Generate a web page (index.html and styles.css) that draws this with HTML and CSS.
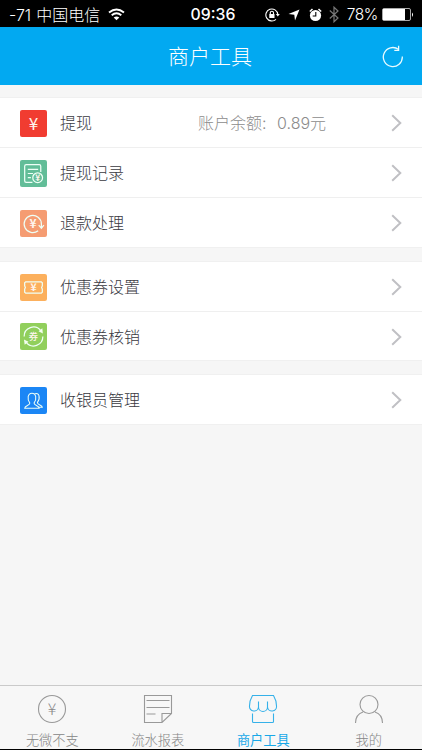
FILE: index.html
```html
<!DOCTYPE html>
<html lang="zh-CN">
<head>
<meta charset="utf-8">
<title>商户工具</title>
<link rel="stylesheet" href="styles.css">
</head>
<body>
<div class="app">
  <div class="status">
    <div class="carrier"><span class="signal">-71</span><span class="operator">中国电信</span>
      <svg width="17" height="13" viewBox="0 0 17 13" fill="none" stroke="#fff" stroke-width="1.9"><path d="M1 4.500Q8.500-1.700 16 4.500M3.700 7.300Q8.500 3.300 13.300 7.300"/><path d="M8.500 12.300L5.700 9.400Q8.500 7.400 11.300 9.400Z" fill="#fff" stroke="none"/></svg>
    </div>
    <time class="clock">09:36</time>
    <div class="indicators">
      <svg width="15" height="14" viewBox="0 0 15 14" fill="none" stroke="#fff" stroke-width="1.1"><path d="M11 11.300A6 6 0 1 1 12.800 6.200"/><path d="M10.800 6h4L12.800 8.600Z" fill="#fff" stroke="none"/><rect x="4.300" y="6" width="5.200" height="4" fill="#fff" stroke="none"/><path d="M5.300 6V4.800a1.600 1.600 0 0 1 3.200 0V6"/></svg>
      <svg class="locate" width="12" height="12" viewBox="0 0 12 12"><path d="M11.500.5L7 11.500 6.300 5.800.5 5Z" fill="#fff"/></svg>
      <svg class="alarm" width="13" height="14" viewBox="0 0 13 14"><circle cx="6.500" cy="7.500" r="5.600" fill="#fff"/><path d="M.8 3.500L3.500 1M12.200 3.500L9.500 1" stroke="#fff" stroke-width="1.500"/><path d="M6.800 4v4H3.700" fill="none" stroke="#000" stroke-width="1.100"/></svg>
      <svg class="bluetooth" width="10" height="17" viewBox="0 0 10 17" fill="none" stroke="#777" stroke-width="1.200"><path d="M.8 4.500L9 12 5 15.800V1.200L9 5 .8 12.500"/></svg>
      <span class="percent">78%</span>
      <svg width="32" height="14" viewBox="0 0 32 14"><rect x=".5" y=".5" width="28" height="12" rx="1.500" fill="none" stroke="#aaa"/><rect x="1" y="1" width="22" height="11" fill="#fff"/><path d="M30 4.500q2 2 0 4.500Z" fill="#fff"/></svg>
    </div>
  </div>

  <header class="header">
    <h1>商户工具</h1>
    <svg class="refresh" width="22" height="23" viewBox="0 0 22 23" fill="none" stroke="#e8fbff" stroke-width="1.300"><path d="M20.300 11.500A9.500 9.500 0 1 1 16.600 4.500"/><path d="M16.600.8V5.300H12.300"/></svg>
  </header>

  <main class="content">
    <section class="group">
      <a class="row">
        <svg class="icon" viewBox="0 0 26 26"><rect width="26" height="26" rx="2" fill="#f13c31"/><text class="yen" x="13" y="19" font-size="16.500">¥</text></svg>
        <span class="label">提现</span><span class="balance">账户余额: <span class="amount">0.89元</span></span>
        <svg class="chevron" viewBox="0 0 11 18"><path d="M1.200 1.200L9.300 9 1.200 16.800"/></svg>
      </a>
      <a class="row">
        <svg class="icon" viewBox="0 0 26 26"><rect width="26" height="26" rx="2" fill="#62bd98"/><g class="line"><path d="M12 21.500H6A1.500 1.500 0 0 1 4.500 20V6A1.500 1.500 0 0 1 6 4.500H18.500A1.500 1.500 0 0 1 20 6V11.500M7.500 9H17.500M7.500 13H12.500M7.500 17H10.500"/><circle cx="17" cy="17" r="4.700"/></g><text class="yen" x="17" y="20" font-size="8" font-weight="700">¥</text></svg>
        <span class="label">提现记录</span>
        <svg class="chevron" viewBox="0 0 11 18"><path d="M1.200 1.200L9.300 9 1.200 16.800"/></svg>
      </a>
      <a class="row">
        <svg class="icon" viewBox="0 0 26 26"><rect width="26" height="26" rx="2" fill="#f59c72"/><g class="line"><path d="M17.500 20A8.300 8.300 0 1 1 20.600 13.500V17M18 14.500L20.600 17.500 23 14.500"/></g><text class="yen" x="12.500" y="17.300" font-size="11.500" font-weight="700">¥</text></svg>
        <span class="label">退款处理</span>
        <svg class="chevron" viewBox="0 0 11 18"><path d="M1.200 1.200L9.300 9 1.200 16.800"/></svg>
      </a>
    </section>

    <section class="group">
      <a class="row">
        <svg class="icon" viewBox="0 0 26 26"><rect width="26" height="26" rx="2" fill="#fcb05d"/><path class="line" d="M5.500 7.500H20.500L21.500 8.500V11.500L20.800 13 21.500 14.500V17.500L20.500 18.500H5.500L4.500 17.500V14.500L5.200 13 4.500 11.500V8.500Z"/><text class="yen" x="13" y="16.700" font-size="10" font-weight="700">¥</text></svg>
        <span class="label">优惠券设置</span>
        <svg class="chevron" viewBox="0 0 11 18"><path d="M1.200 1.200L9.300 9 1.200 16.800"/></svg>
      </a>
      <a class="row">
        <svg class="icon" viewBox="0 0 26 26"><rect width="26" height="26" rx="2" fill="#91cf5c"/><path class="line" d="M4 13A9 9 0 0 1 20 7.300M22 13A9 9 0 0 1 6 18.700"/><path d="M21.500 5L22 10 17.800 8ZM4.500 21L3.800 16 8.200 18Z" fill="#f4fff0"/><text class="yen" x="13" y="16.400" font-size="9" font-weight="500">券</text></svg>
        <span class="label">优惠券核销</span>
        <svg class="chevron" viewBox="0 0 11 18"><path d="M1.200 1.200L9.300 9 1.200 16.800"/></svg>
      </a>
    </section>

    <section class="group">
      <a class="row">
        <svg class="icon" viewBox="0 0 26 26"><rect width="26" height="26" rx="2" fill="#1b86f5"/><path class="line people" d="M4.500 20.500C4.500 17.500 9.500 18 9.500 15.500C6.500 11.500 7.500 6 11.500 6S16.500 11.500 13.500 15.500C13.500 18 18.500 17.500 18.500 20.500ZM13.800 6.700C18.500 4.500 20 10.500 16.700 15C16.700 17.500 21.500 17 21.500 19.500H18.500"/></svg>
        <span class="label">收银员管理</span>
        <svg class="chevron" viewBox="0 0 11 18"><path d="M1.200 1.200L9.300 9 1.200 16.800"/></svg>
      </a>
    </section>
  </main>

  <nav class="tabs">
    <a class="tab">
      <svg viewBox="0 0 30 30"><circle cx="15" cy="15" r="13.500"/><text class="tab-yen" x="15" y="21">¥</text></svg>
      <span>无微不支</span>
    </a>
    <a class="tab">
      <svg viewBox="0 0 30 30"><path d="M1.500 1.500H28.500V19.500L19 28.500H1.500ZM28.500 19.500H19V28.500M3.500 6.500H26.500M3.500 13.500H26.500M3.500 20H12.500"/></svg>
      <span>流水报表</span>
    </a>
    <a class="tab active">
      <svg viewBox="0 0 30 30"><path d="M4.500 1.500H25.500C27 4 28.500 8 28.500 12A4.500 4.500 0 0 1 19.500 13A4.500 4.500 0 0 1 10.500 13A4.500 4.500 0 0 1 1.500 12C1.500 8 3 4 4.500 1.500ZM10.500 7.500V13M19.500 7.500V13M4.500 19.500V27.500Q4.500 28.500 5.500 28.500H24.500Q25.500 28.500 25.500 27.500V19.500"/></svg>
      <span>商户工具</span>
    </a>
    <a class="tab">
      <svg viewBox="0 0 30 30"><circle cx="15" cy="10.500" r="9"/><path d="M1.500 29C1.500 23.500 4.500 19.500 9 18M21 18C25.500 19.500 28.500 23.500 28.500 29"/></svg>
      <span>我的</span>
    </a>
  </nav>
</div>
</body>
</html>
```
FILE: styles.css
```css
* { box-sizing: border-box; }

body {
  margin: 0;
  background: #f6f6f6;
  font-family: Inter, "Noto Sans CJK SC", sans-serif;
}

.app {
  display: flex;
  flex-direction: column;
  height: 750px;
  border-bottom: 1px solid #000;
}

.status {
  display: grid;
  grid-template-columns: 1fr auto 1fr;
  align-items: center;
  flex: none;
  height: 27px;
  padding: 2px 8px 0 9px;
  background: #000;
  color: #fff;
  font-size: 15px;
  line-height: 24px;
  white-space: nowrap;
}

.carrier, .indicators { display: flex; align-items: center; }
.signal { font-size: 16px; font-weight: 300; }
.operator { margin: 0 8px 0 5px; font-size: 16px; font-weight: 300; }
.clock { margin-left: 3px; font-size: 15.8px; font-weight: 500; }
.indicators { justify-content: flex-end; }
.locate { margin-left: 8px; }
.alarm { margin-left: 9px; }
.bluetooth { margin-left: 7px; }
.percent { margin: 0 4px 0 8px; font-size: 15.5px; font-weight: 300; letter-spacing: -0.4px; }

.header {
  display: grid;
  grid-template-columns: 1fr auto 1fr;
  align-items: center;
  flex: none;
  height: 58px;
  padding-right: 18px;
  background: #02a9f1;
  color: #fff;
}

.header h1 {
  grid-column: 2;
  margin: 1px 0 0 16px;
  font-size: 21px;
  font-weight: 300;
  line-height: 30px;
}

.refresh { justify-self: end; }

.content {
  display: flex;
  flex: 1;
  flex-direction: column;
  gap: 13px;
  padding-top: 12px;
}

.group {
  background: #fff;
  border-top: 1px solid #f0f0f0;
  border-bottom: 1px solid #f0f0f0;
}

.row {
  display: flex;
  align-items: center;
  height: 49px;
  padding: 1px 20px 0;
  color: #39393f;
  font-size: 16px;
}

.row + .row { height: 50px; border-top: 1px solid #efefef; }
.group + .group .row:last-child { height: 49px; }

.icon { width: 27px; height: 27px; margin-right: 13px; }
.label { width: 138px; margin-top: -2px; font-weight: 300; }
.balance { margin-top: -2px; color: #8c8c8c; font-weight: 300; white-space: pre; }
.amount { margin-left: 6px; }

.chevron {
  width: 11px;
  height: 18px;
  margin-left: auto;
  fill: none;
  stroke: #c0c0c4;
  stroke-width: 2;
}

.yen {
  fill: #fff5ee;
  font-family: "Noto Sans CJK SC", sans-serif;
  text-anchor: middle;
}

.line { fill: none; stroke: #eefff6; stroke-width: 1.2; }
.people { stroke-width: 1; }

.tabs {
  display: grid;
  grid-template-columns: repeat(4, 1fr);
  flex: none;
  height: 64px;
  border-top: 1px solid #cacaca;
  background: #f7f7f7;
}

.tab {
  display: flex;
  flex-direction: column;
  align-items: center;
  padding: 8px 1px 0 0;
  color: #858585;
  font-size: 13.2px;
  font-weight: 300;
  line-height: 20px;
}

.tab svg {
  width: 30px;
  height: 30px;
  margin-bottom: 6px;
  fill: none;
  stroke: #999;
  stroke-width: 1.1;
}

.tab .tab-yen {
  fill: #888;
  stroke: none;
  font-family: "Noto Sans CJK SC", sans-serif;
  font-size: 16px;
  text-anchor: middle;
}

.tab.active { color: #18a8e8; font-weight: 400; }
.tab.active svg { stroke: #35b1e9; }
```
